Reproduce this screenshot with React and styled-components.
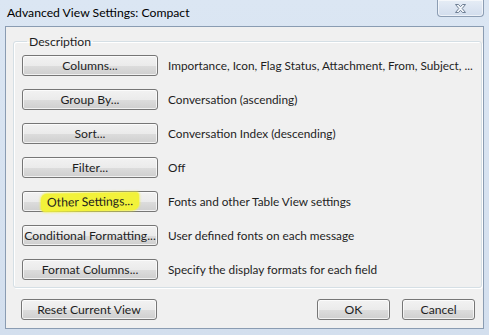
import React from "react";
import styled, { createGlobalStyle } from "styled-components";

const GlobalStyle = createGlobalStyle`
  html, body {
    margin: 0;
    padding: 0;
    background: #d9e4f1;
  }
`;

const Window = styled.div`
  width: 489px;
  height: 335px;
  box-sizing: border-box;
  background: linear-gradient(#dbe6f3, #d3dfee);
  font-family: Lato, "Noto Sans", sans-serif;
  font-size: 12px;
  color: #1e1e1e;
  display: flex;
  flex-direction: column;
`;

const TitleBar = styled.div`
  height: 26px;
  display: flex;
  align-items: flex-start;
  justify-content: space-between;
  padding: 0 5px 0 7px;
`;

const Title = styled.div`
  padding-top: 5px;
  font-size: 12.2px;
  color: #000;
`;

const CloseButton = styled.div`
  width: 45px;
  height: 16px;
  border: 1px solid #8c9db3;
  border-top: none;
  border-radius: 0 0 4px 4px;
  background: linear-gradient(#e6edf6, #d2dded);
  display: flex;
  align-items: center;
  justify-content: center;
  box-shadow: inset 0 0 0 1px rgba(255, 255, 255, 0.6);
`;

const Client = styled.div`
  margin: 0 5px;
  height: 303px;
  box-sizing: border-box;
  border: 1px solid #8a9cb2;
  background: #f0f0f0;
  padding: 7px 7px 0 7px;
  display: flex;
  flex-direction: column;
`;

const Group = styled.fieldset`
  margin: 0;
  padding: 6px 8px 7px 8px;
  border: 1px solid #d5dfe5;
  border-radius: 3px;
  box-shadow: inset 1px 1px 0 #fff, 1px 1px 0 #fff;
  display: flex;
  flex-direction: column;
  gap: 13px;
`;

const Legend = styled.legend`
  padding: 0 2px;
  margin-left: 5px;
  font-size: 12.2px;
  line-height: 15px;
`;

const Row = styled.div`
  display: flex;
  align-items: center;
  gap: 10px;
  height: 21px;
`;

const Button = styled.button`
  width: ${(p) => p.$w || 136}px;
  height: 21px;
  box-sizing: border-box;
  padding: 0;
  border: 1px solid #767676;
  border-radius: 3px;
  background: linear-gradient(#f2f2f2 0%, #ebebeb 50%, #dddddd 51%, #cfcfcf 100%);
  box-shadow: inset 0 0 0 1px rgba(255, 255, 255, 0.7);
  font-family: inherit;
  font-size: 12.2px;
  color: #1e1e1e;
  white-space: nowrap;
  display: flex;
  align-items: center;
  justify-content: center;
  flex-shrink: 0;
`;

const Marker = styled.span`
  background: #f2f23a;
  padding: 1px 6px 2px;
  margin: 0 -6px;
  border-radius: 6px 3px 7px 4px;
  box-shadow: 0 0 2px 1px rgba(242, 242, 58, 0.7);
  transform: rotate(-1deg);
`;

const Info = styled.span`
  font-size: 11.8px;
  white-space: nowrap;
`;

const Footer = styled.div`
  display: flex;
  align-items: center;
  padding: 11px 1px 0 8px;
  gap: 12px;
`;

const Spacer = styled.div`
  flex: 1;
`;

const rows = [
  ["Columns...", "Importance, Icon, Flag Status, Attachment, From, Subject, ..."],
  ["Group By...", "Conversation (ascending)"],
  ["Sort...", "Conversation Index (descending)"],
  ["Filter...", "Off"],
  ["Other Settings...", "Fonts and other Table View settings", true],
  ["Conditional Formatting...", "User defined fonts on each message"],
  ["Format Columns...", "Specify the display formats for each field"],
];

export default function App() {
  return (
    <>
      <GlobalStyle />
      <Window>
        <TitleBar>
          <Title>Advanced View Settings: Compact</Title>
          <CloseButton>
            <svg width="13" height="11" viewBox="0 0 13 11">
              <path
                d="M1.5 1.5h3l2 2.2 2-2.2h3l-3.3 4 3.3 4h-3l-2-2.2-2 2.2h-3l3.3-4z"
                fill="#f4f7fb"
                stroke="#6f7f94"
                strokeWidth="1"
                strokeLinejoin="round"
              />
            </svg>
          </CloseButton>
        </TitleBar>
        <Client>
          <Group>
            <Legend>Description</Legend>
            {rows.map(([label, info, marked]) => (
              <Row key={label}>
                <Button>{marked ? <Marker>{label}</Marker> : label}</Button>
                <Info>{info}</Info>
              </Row>
            ))}
          </Group>
          <Footer>
            <Button>Reset Current View</Button>
            <Spacer />
            <Button $w={73}>OK</Button>
            <Button $w={73}>Cancel</Button>
          </Footer>
        </Client>
      </Window>
    </>
  );
}
